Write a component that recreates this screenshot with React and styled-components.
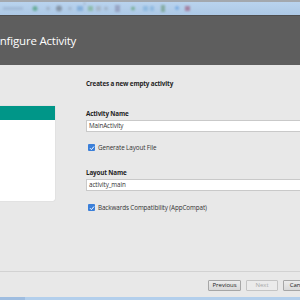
import React from "react";
import styled, { createGlobalStyle } from "styled-components";

const Global = createGlobalStyle`
  html, body { margin: 0; padding: 0; background: #e8e8e8; }
  body { font-family: "Open Sans", "Noto Sans", sans-serif; }
  * { box-sizing: border-box; }
`;

const Frame = styled.div`
  width: 300px;
  height: 300px;
  overflow: hidden;
  display: flex;
  flex-direction: column;
  background: #e8e8e8;
`;

const Toolbar = styled.div`
  height: 15px;
  flex: none;
  border-top: 2px solid #a3a8ae;
  background: linear-gradient(#b9d3ee, #adc9e6);
  display: flex;
  align-items: center;
  overflow: hidden;
`;

const Header = styled.div`
  height: 50px;
  flex: none;
  background: #5e5e5e;
  border-top: 1px solid #4e4e4e;
  display: flex;
  align-items: center;
  overflow: hidden;
`;

const Title = styled.h1`
  margin: 0 0 0 -14px;
  font-weight: 400;
  font-size: 11.5px;
  letter-spacing: -0.2px;
  color: #ffffff;
  white-space: nowrap;
  font-family: "Open Sans", sans-serif;
`;

const Body = styled.div`
  flex: 1;
  display: flex;
  gap: 31px;
  overflow: hidden;
`;

const LeftCol = styled.div`
  width: 55px;
  flex: none;
  padding-top: 41px;
`;

const Preview = styled.div`
  height: 95px;
  background: #ffffff;
  border-bottom-right-radius: 2px;
  box-shadow: 0 0 1px rgba(0,0,0,0.25);
  overflow: hidden;
`;

const PreviewBar = styled.div`
  height: 14px;
  background: #009688;
`;

const RightCol = styled.div`
  flex: none;
  width: 260px;
  display: flex;
  flex-direction: column;
  padding-top: 14px;
`;

const Lead = styled.div`
  font-size: 6.3px;
  font-weight: 700;
  letter-spacing: -0.15px;
  color: #1e1e1e;
  line-height: 9px;
  margin-bottom: 21px;
  white-space: nowrap;
`;

const Label = styled.div`
  font-size: 6.3px;
  font-weight: 700;
  letter-spacing: -0.15px;
  color: #1e1e1e;
  line-height: 9px;
  margin-bottom: 2px;
  white-space: nowrap;
`;

const Input = styled.div`
  height: 12px;
  background: #ffffff;
  border: 1px solid #c9c9c9;
  font-size: 6.3px;
  letter-spacing: -0.1px;
  line-height: 10px;
  padding-left: 2px;
  color: #333;
  white-space: nowrap;
`;

const CheckRow = styled.div`
  display: flex;
  align-items: center;
  gap: 3px;
  padding-left: 2px;
  margin-top: ${p => p.$top}px;
  margin-bottom: ${p => p.$bottom}px;
  font-size: 6.3px;
  letter-spacing: -0.1px;
  line-height: 9px;
  color: #333;
  white-space: nowrap;
`;

const Box = styled.span`
  width: 7px;
  height: 7px;
  border-radius: 1px;
  background: #3b7fd9;
  display: inline-flex;
  align-items: center;
  justify-content: center;
  flex: none;
`;

const Footer = styled.div`
  height: 26px;
  flex: none;
  border-top: 1px solid #d2d2d2;
  display: flex;
  align-items: center;
  gap: 5px;
  padding: 1px 0 0 208px;
  overflow: hidden;
`;

const Button = styled.div`
  height: 11px;
  width: ${p => p.$w}px;
  flex: none;
  border: 1px solid ${p => (p.$disabled ? "#c4c4c4" : "#a6a6a6")};
  border-radius: 1px;
  background: ${p => (p.$disabled ? "#ebebeb" : "linear-gradient(#ececec, #d9d9d9)")};
  color: ${p => (p.$disabled ? "#a8a8a8" : "#222")};
  font-size: 6px;
  display: flex;
  align-items: center;
  justify-content: center;
`;

const BottomStrip = styled.div`
  height: 3px;
  flex: none;
  background: linear-gradient(90deg, #9fbde0 0, #9fbde0 25px, #b3cfec 25px);
`;

const Check = () => (
  <svg width="6" height="6" viewBox="0 0 6 6">
    <path d="M1 3.2 L2.4 4.6 L5 1.5" fill="none" stroke="#fff" strokeWidth="1" />
  </svg>
);

const ToolIcons = () => (
  <svg width="300" height="13" viewBox="0 0 300 13" style={{ filter: "blur(0.8px)", opacity: 0.65 }}>
    <rect x="3" y="5" width="20" height="3" fill="#8ea5c2" opacity="0.7" />
    <circle cx="35" cy="6.5" r="2.5" fill="#3f9a6e" />
    <circle cx="48" cy="6.5" r="2" fill="#9aa9bb" />
    <circle cx="59" cy="6.5" r="3" fill="#6f7884" />
    <circle cx="70" cy="6.5" r="2" fill="#9db0c6" />
    <rect x="77" y="4" width="6" height="5" fill="#6ea1d4" />
    <rect x="84" y="0" width="1" height="3" fill="#8c96a3" />
    <rect x="88" y="4" width="5" height="5" fill="#79b38c" />
    <rect x="96" y="4" width="5" height="5" fill="#a2aebb" />
    <circle cx="106" cy="6.5" r="2" fill="#9aa9bb" />
    <rect x="115" y="3" width="5" height="7" fill="#8a8fb0" />
    <circle cx="133" cy="6.5" r="2" fill="#5aa06e" />
    <rect x="143" y="4" width="5" height="5" fill="#7eb1dc" />
    <rect x="150" y="4" width="4" height="5" fill="#7eb1dc" />
    <rect x="161" y="3" width="4" height="7" fill="#6c9a7e" />
    <circle cx="177" cy="6" r="2" fill="#5f9ee0" />
    <rect x="185" y="4" width="5" height="5" fill="#9c5a7c" />
  </svg>
);

export default function App() {
  return (
    <>
      <Global />
      <Frame>
        <Toolbar>
          <ToolIcons />
        </Toolbar>
        <Header>
          <Title>Configure Activity</Title>
        </Header>
        <Body>
          <LeftCol>
            <Preview>
              <PreviewBar />
            </Preview>
          </LeftCol>
          <RightCol>
            <Lead>Creates a new empty activity</Lead>
            <Label>Activity Name</Label>
            <Input>MainActivity</Input>
            <CheckRow $top={11} $bottom={16}>
              <Box><Check /></Box>
              Generate Layout File
            </CheckRow>
            <Label>Layout Name</Label>
            <Input>activity_main</Input>
            <CheckRow $top={12} $bottom={0}>
              <Box><Check /></Box>
              Backwards Compatibility (AppCompat)
            </CheckRow>
          </RightCol>
        </Body>
        <Footer>
          <Button $w={33}>Previous</Button>
          <Button $w={32} $disabled>Next</Button>
          <Button $w={32}>Cancel</Button>
        </Footer>
        <BottomStrip />
      </Frame>
    </>
  );
}
